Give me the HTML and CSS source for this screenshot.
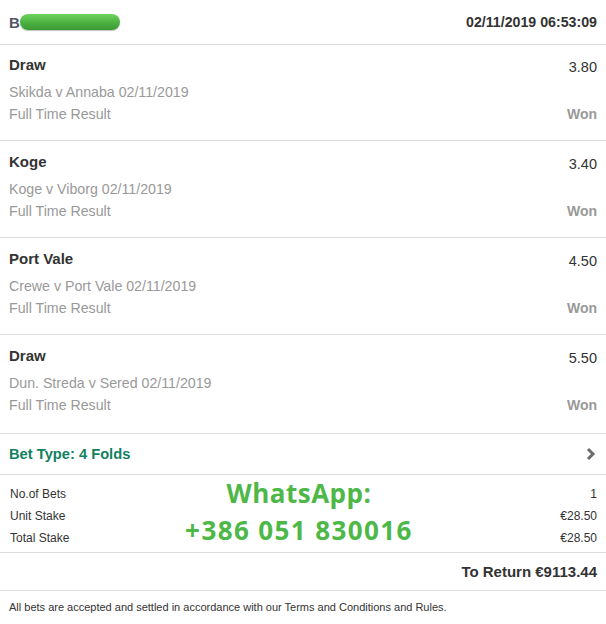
FILE: index.html
```html
<!DOCTYPE html>
<html>
<head>
<meta charset="utf-8">
<link rel="stylesheet" href="styles.css">
</head>
<body>
<div class="slip">
  <div class="header">
    <div class="name"><span class="initial">B</span><span class="pill"></span></div>
    <div class="date">02/11/2019 06:53:09</div>
  </div>

  <div class="sel first">
    <div class="row"><span class="title">Draw</span><span class="odds">3.80</span></div>
    <div class="row sub">Skikda v Annaba 02/11/2019</div>
    <div class="row sub"><span>Full Time Result</span><span class="won">Won</span></div>
  </div>
  <div class="sel">
    <div class="row"><span class="title">Koge</span><span class="odds">3.40</span></div>
    <div class="row sub">Koge v Viborg 02/11/2019</div>
    <div class="row sub"><span>Full Time Result</span><span class="won">Won</span></div>
  </div>
  <div class="sel">
    <div class="row"><span class="title">Port Vale</span><span class="odds">4.50</span></div>
    <div class="row sub">Crewe v Port Vale 02/11/2019</div>
    <div class="row sub"><span>Full Time Result</span><span class="won">Won</span></div>
  </div>
  <div class="sel last">
    <div class="row"><span class="title">Draw</span><span class="odds">5.50</span></div>
    <div class="row sub">Dun. Streda v Sered 02/11/2019</div>
    <div class="row sub"><span>Full Time Result</span><span class="won">Won</span></div>
  </div>

  <div class="bettype">
    <span>Bet Type: 4 Folds</span>
    <svg class="chev" width="10" height="14" viewBox="0 0 10 14"><path d="M2 2 L7 7 L2 12" fill="none" stroke="#6b6b6b" stroke-width="3"/></svg>
  </div>

  <div class="stakes">
    <div class="srow"><span>No.of Bets</span><span>1</span></div>
    <div class="srow"><span>Unit Stake</span><span>€28.50</span></div>
    <div class="srow"><span>Total Stake</span><span>€28.50</span></div>
    <div class="wa"><span class="wa1">WhatsApp:</span><span class="wa2">+386 051 830016</span></div>
  </div>

  <div class="ret">To Return €9113.44</div>

  <div class="foot">All bets are accepted and settled in accordance with our Terms and Conditions and Rules.</div>
</div>
</body>
</html>
```

FILE: styles.css
```css
html, body {
  margin: 0;
  padding: 0;
  background: #fff;
}
body {
  font-family: "Liberation Sans", Arial, sans-serif;
  color: #333;
  width: 606px;
}
.slip {
  width: 606px;
}
.header {
  height: 44px;
  border-bottom: 1px solid #dcdcdc;
  display: flex;
  align-items: center;
  justify-content: space-between;
  padding: 0 9px;
}
.name {
  display: flex;
  align-items: center;
}
.initial {
  font-weight: bold;
  font-size: 15px;
  color: #556;
}
.pill {
  display: inline-block;
  width: 100px;
  height: 16px;
  border-radius: 8px;
  margin-left: 0;
  background: linear-gradient(#6fd35e, #4cb040 55%, #3a9a35);
  box-shadow: 0 1px 1px rgba(0,0,0,0.25);
}
.date {
  font-weight: bold;
  font-size: 14.2px;
  color: #333;
}
.sel {
  border-bottom: 1px solid #dcdcdc;
  padding: 10px 9px 15px;
}
.sel.first {
  padding-top: 9px;
}
.sel.last {
  padding-bottom: 17px;
}
.row {
  display: flex;
  justify-content: space-between;
  line-height: 22px;
  font-size: 14px;
}
.sel .row:first-child {
  margin-bottom: 5px;
}
.title {
  font-weight: bold;
  font-size: 15px;
  color: #333;
}
.odds {
  color: #333;
  font-size: 14.5px;
  position: relative;
  top: 2px;
}
.sub {
  color: #999;
  font-size: 14.2px;
}
.won {
  font-weight: bold;
  color: #999;
  font-size: 14px;
}
.bettype {
  height: 40px;
  border-bottom: 1px solid #dcdcdc;
  display: flex;
  align-items: center;
  justify-content: space-between;
  padding: 0 10px 0 9px;
  font-weight: bold;
  font-size: 14.7px;
  color: #127f5e;
}
.chev {
  display: block;
}
.stakes {
  position: relative;
  border-bottom: 1px solid #dcdcdc;
  padding: 8px 9px 3px 10px;
}
.srow {
  display: flex;
  justify-content: space-between;
  font-size: 12px;
  line-height: 22px;
  color: #333;
}
.wa {
  position: absolute;
  left: 120px;
  width: 358px;
  top: 0;
  display: flex;
  flex-direction: column;
  align-items: center;
  font-family: "Open Sans", sans-serif;
  font-weight: bold;
  font-size: 26px;
  line-height: 37px;
  color: #4db848;
}
.wa1 {
  letter-spacing: 0.5px;
}
.wa2 {
  letter-spacing: 1.4px;
}
.ret {
  height: 37px;
  border-bottom: 1px solid #dcdcdc;
  display: flex;
  align-items: center;
  justify-content: flex-end;
  padding: 0 9px;
  font-weight: bold;
  font-size: 15px;
  color: #333;
}
.foot {
  font-size: 11px;
  color: #333;
  padding: 9px 9px 0;
  line-height: 14px;
}
```
